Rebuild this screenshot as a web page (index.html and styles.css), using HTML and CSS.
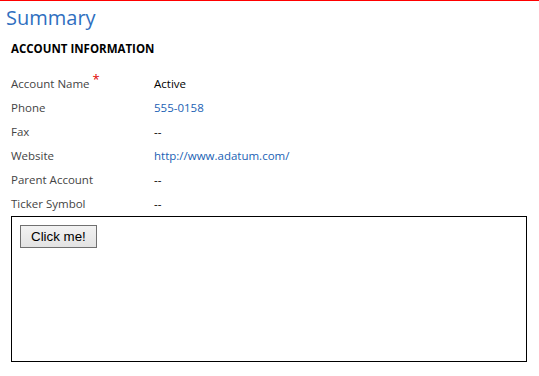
FILE: index.html
```html
<!DOCTYPE html>
<html lang="en">
  <head>
    <meta charset="UTF-8" />
    <meta name="viewport" content="width=device-width, initial-scale=1.0" />
    <title>Summary</title>
    <link rel="stylesheet" href="styles.css">
  </head>
  <body>
    <h1 class="title">Summary</h1>
    <div class="section">
      <h2 class="section-head">ACCOUNT INFORMATION</h2>
      <div class="fields">
        <div class="label">Account Name<span class="req">*</span></div>
        <div class="value">Active</div>
        <div class="label">Phone</div>
        <div class="value link">555-0158</div>
        <div class="label">Fax</div>
        <div class="value">--</div>
        <div class="label">Website</div>
        <div class="value link">http://www.adatum.com/</div>
        <div class="label">Parent Account</div>
        <div class="value">--</div>
        <div class="label">Ticker Symbol</div>
        <div class="value">--</div>
      </div>
    </div>
    <div class="frame">
      <button class="btn">Click me!</button>
    </div>
  </body>
</html>
```

FILE: styles.css
```css
body {
  margin: 0;
  border-top: 1px solid #ff0000;
  font-family: "Open Sans", "Noto Sans", sans-serif;
  background: #fff;
}
.title {
  margin: 0;
  padding: 3px 0 0 6px;
  height: 35px;
  box-sizing: border-box;
  font-size: 20px;
  font-weight: normal;
  line-height: 28px;
  color: #2f6fbf;
}
.section {
  padding-left: 11px;
}
.section-head {
  margin: 0;
  height: 36px;
  padding-top: 5px;
  box-sizing: border-box;
  font-size: 11.5px;
  font-weight: bold;
  line-height: 16px;
  color: #000;
}
.fields {
  display: grid;
  grid-template-columns: 143px auto;
  grid-auto-rows: 24px;
  font-size: 11.5px;
  line-height: 24px;
}
.label {
  color: #444;
}
.req {
  color: #e00000;
  font-size: 13px;
  margin-left: 3px;
  vertical-align: top;
  line-height: 14px;
}
.value {
  color: #000;
}
.link {
  color: #1a5fb4;
}
.frame {
  margin: 0 0 0 11px;
  width: 516px;
  height: 146px;
  box-sizing: border-box;
  border: 1px solid #000;
  padding: 8px;
}
.btn {
  display: block;
  font-family: "Liberation Sans", Arial, sans-serif;
  font-size: 13.33px;
  height: 23px;
  padding: 0 10px;
  color: #000;
  background: linear-gradient(#f2f2f2, #e3e3e3);
  border: 1px solid #707070;
  border-radius: 0;
}
```
